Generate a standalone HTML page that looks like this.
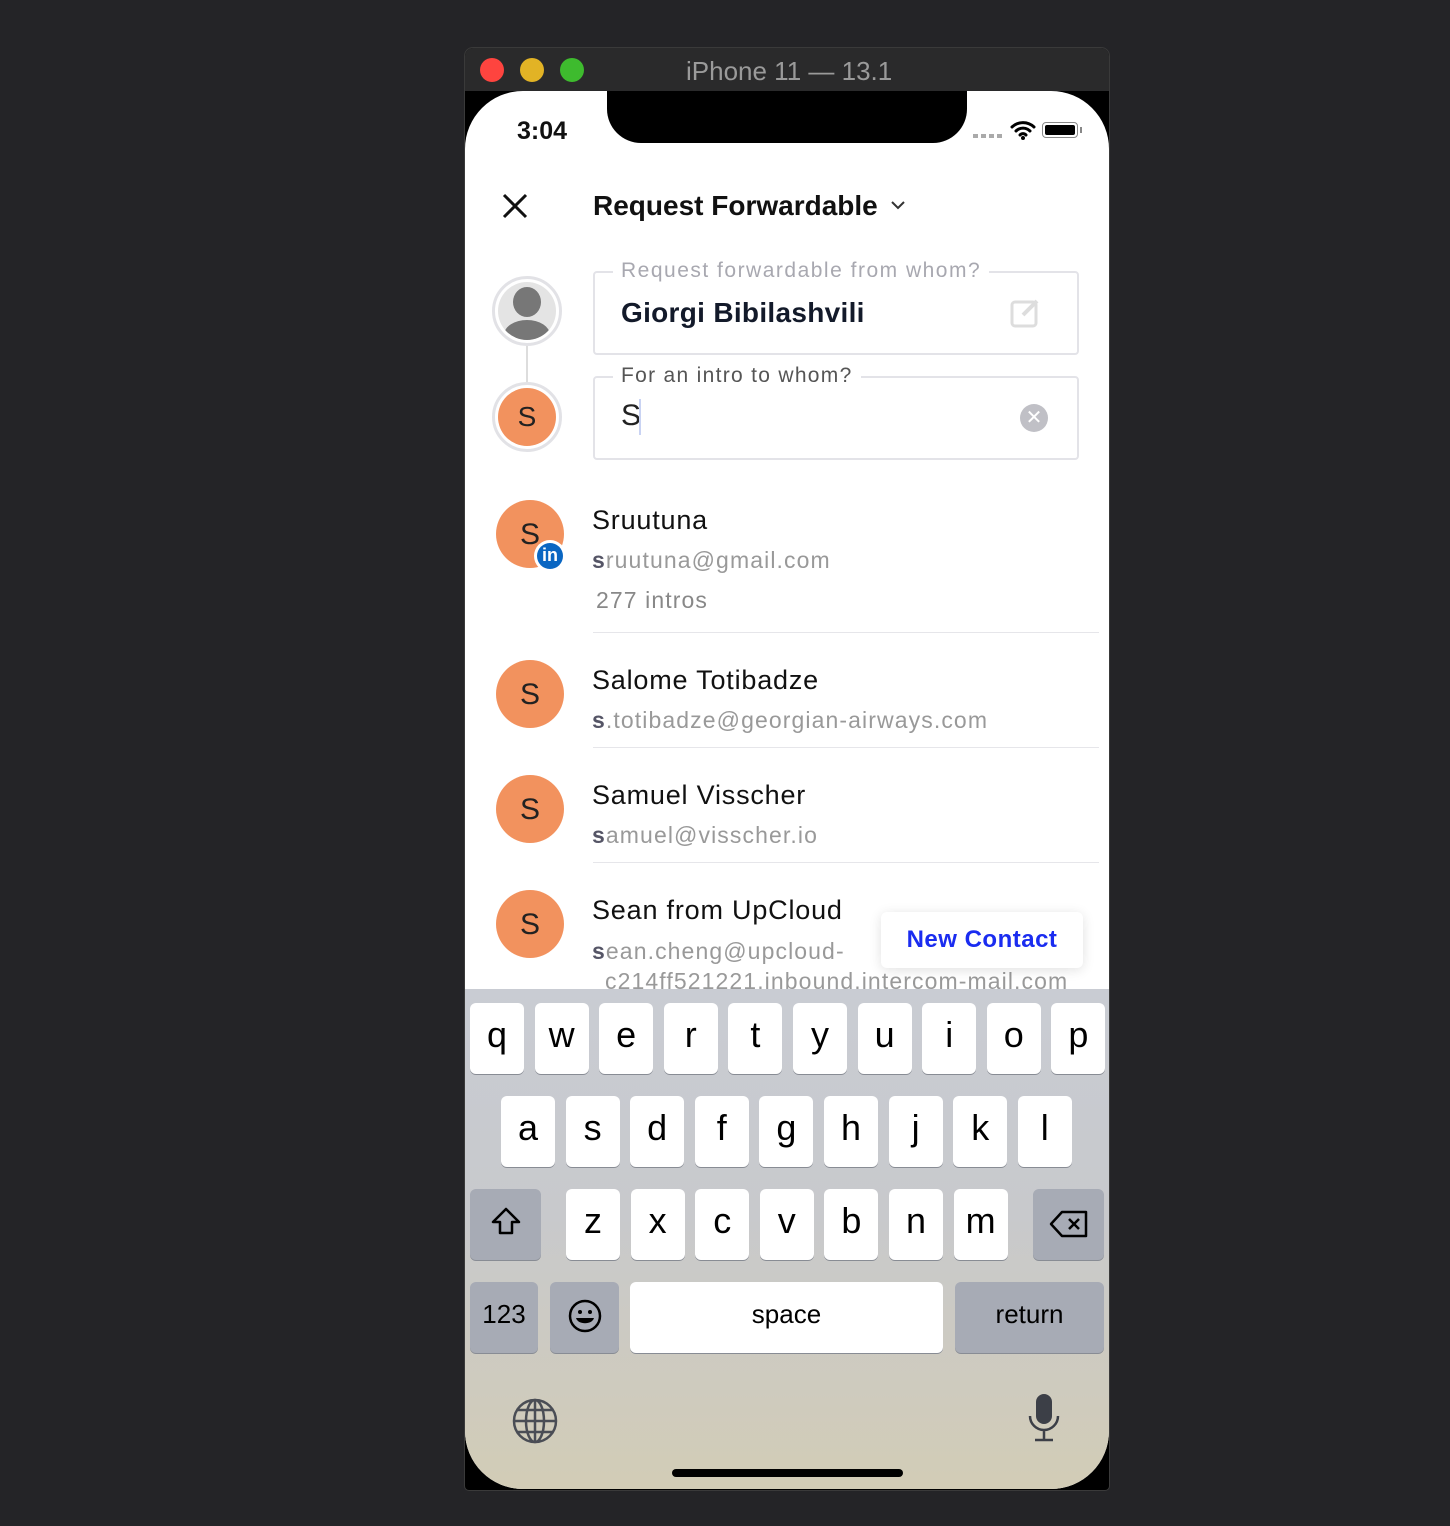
<!DOCTYPE html>
<html><head><meta charset="utf-8"><style>
body{margin:0;width:1450px;height:1526px;background:#242427;position:relative;overflow:hidden;font-family:"Liberation Sans",sans-serif}
.a{position:absolute}
.win{left:465px;top:48px;width:644px;height:1442px;background:#000;border-radius:8px 8px 4px 4px;box-shadow:0 0 0 1px #3a3a3a}
.tb{left:465px;top:48px;width:644px;height:43px;background:#2a2a2b;border-radius:8px 8px 0 0}
.dot{width:24px;height:24px;border-radius:50%;top:58px}
.scr{left:465px;top:91px;width:644px;height:1398px;background:#fff;border-radius:58px;overflow:hidden}
.t{color:#111;white-space:nowrap}
.av{width:68px;height:68px;border-radius:50%;background:#f2925e;color:#222;font-size:30px;text-align:center;line-height:70px}
.sep{height:1px;background:#e6e6ea;left:128px;width:506px}
.key{background:#fff;border-radius:6px;box-shadow:0 1px 0 #888c94;text-align:center;color:#000;font-size:36px;line-height:64px;height:71px}
.g{background:#a7abb5}
.nm{font-size:27px;letter-spacing:0.8px}
.em{font-size:23px;color:#999;letter-spacing:1.1px}
</style></head><body>
<div class="a win"></div>
<div class="a tb"></div>
<div class="a dot" style="left:480px;background:#fe443f"></div>
<div class="a dot" style="left:520px;background:#e2b325"></div>
<div class="a dot" style="left:560px;background:#3ebb2e"></div>
<div class="a" style="left:686px;top:56px;color:#9a9a9a;font-size:26px">iPhone 11 — 13.1</div>
<div class="a scr">
 <div class="a" style="left:142px;top:0;width:360px;height:52px;background:#000;border-radius:0 0 34px 34px"></div>
 <div class="a t" style="left:52px;top:26px;font-size:25px;font-weight:bold">3:04</div>
 <div class="a" style="left:508px;top:43px;width:30px;height:4px;background:repeating-linear-gradient(90deg,#aaa 0 5px,transparent 5px 8px)"></div>
 <svg class="a" style="left:545px;top:28px" width="26" height="22" viewBox="0 0 26 22"><path d="M2 8a16 16 0 0 1 22 0M6 12a10 10 0 0 1 14 0M10 16a4 4 0 0 1 6 0" stroke="#000" stroke-width="3" fill="none" stroke-linecap="round"/><circle cx="13" cy="19" r="2" fill="#000"/></svg>
 <div class="a" style="left:577px;top:31px;width:36px;height:16px;border:1.5px solid #888;border-radius:4px;box-sizing:border-box;padding:2px"><div style="background:#000;height:100%;border-radius:2px"></div></div>
 <div class="a" style="left:615px;top:36px;width:2px;height:6px;background:#888"></div>
 <svg class="a" style="left:37px;top:102px" width="26" height="26"><path d="M2 2L24 24M24 2L2 24" stroke="#111" stroke-width="3"/></svg>
 <div class="a t" style="left:128px;top:99px;font-size:28px;font-weight:bold">Request Forwardable</div>
 <svg class="a" style="left:425px;top:108px" width="16" height="12"><path d="M2 3l6 6 6-6" stroke="#333" stroke-width="2" fill="none"/></svg>
 <div class="a" style="left:61px;top:240px;width:2px;height:54px;background:#ddd"></div>
 <div class="a" style="left:27px;top:185px;width:70px;height:70px;border-radius:50%;border:3px solid #e2e2e6;background:#fff;box-sizing:border-box">
  <div class="a" style="left:3px;top:3px;width:58px;height:58px;border-radius:50%;background:#e4e4e4;overflow:hidden">
  <div class="a" style="left:15px;top:5px;width:28px;height:30px;border-radius:50%;background:#777"></div>
  <div class="a" style="left:6px;top:38px;width:46px;height:30px;border-radius:50%;background:#777"></div></div>
 </div>
 <div class="a" style="left:27px;top:291px;width:70px;height:70px;border-radius:50%;border:3px solid #e2e2e6;box-sizing:border-box;background:#fff"><div class="a av" style="left:3px;top:3px;width:58px;height:58px;line-height:58px;font-size:28px">S</div></div>
 <div class="a" style="left:128px;top:180px;width:482px;height:80px;border:2px solid #e3e3e8;border-radius:4px"></div>
 <div class="a t" style="left:148px;top:168px;background:#fff;padding:0 8px;color:#a8a8b0;font-size:21px;letter-spacing:1.5px">Request forwardable from whom?</div>
 <div class="a t" style="left:156px;top:206px;font-size:28px;font-weight:bold;color:#131a2a;letter-spacing:0.3px">Giorgi Bibilashvili</div>
 <svg class="a" style="left:544px;top:204px" width="34" height="34"><rect x="3" y="7" width="24" height="24" rx="3" stroke="#ddd" stroke-width="3" fill="none"/><path d="M14 20l14-14" stroke="#ddd" stroke-width="4"/></svg>
 <div class="a" style="left:128px;top:285px;width:482px;height:80px;border:2px solid #e3e3e8;border-radius:4px"></div>
 <div class="a t" style="left:148px;top:273px;background:#fff;padding:0 8px;color:#555;font-size:21px;letter-spacing:1.3px">For an intro to whom?</div>
 <div class="a t" style="left:156px;top:308px;font-size:30px;color:#222">S</div>
 <div class="a" style="left:174px;top:308px;width:2px;height:36px;background:#c9d3f3"></div>
 <div class="a" style="left:555px;top:313px;width:28px;height:28px;border-radius:50%;background:#c0c0c6;color:#fff;text-align:center;line-height:28px;font-size:20px">✕</div>
 <div class="a av" style="left:31px;top:409px">S</div>
 <div class="a" style="left:69px;top:449px;width:32px;height:32px;border-radius:50%;background:#fff"><div style="margin:3px;width:26px;height:26px;border-radius:50%;background:#0a66c2;color:#fff;font-weight:bold;font-size:18px;text-align:center;line-height:25px">in</div></div>
 <div class="a t nm" style="left:127px;top:414px">Sruutuna</div>
 <div class="a t em" style="left:127px;top:456px"><b style="color:#556">s</b>ruutuna@gmail.com</div>
 <div class="a t em" style="left:131px;top:496px;color:#888">277 intros</div>
 <div class="a sep" style="top:541px"></div>
 <div class="a av" style="left:31px;top:569px">S</div>
 <div class="a t nm" style="left:127px;top:574px">Salome Totibadze</div>
 <div class="a t em" style="left:127px;top:616px"><b style="color:#556">s</b>.totibadze@georgian-airways.com</div>
 <div class="a sep" style="top:656px"></div>
 <div class="a av" style="left:31px;top:684px">S</div>
 <div class="a t nm" style="left:127px;top:689px">Samuel Visscher</div>
 <div class="a t em" style="left:127px;top:731px"><b style="color:#556">s</b>amuel@visscher.io</div>
 <div class="a sep" style="top:771px"></div>
 <div class="a av" style="left:31px;top:799px">S</div>
 <div class="a t nm" style="left:127px;top:804px">Sean from UpCloud</div>
 <div class="a t em" style="left:127px;top:847px"><b style="color:#556">s</b>ean.cheng@upcloud-</div>
 <div class="a t em" style="left:140px;top:877px">c214ff521221.inbound.intercom-mail.com</div>
 <div class="a" style="left:416px;top:821px;width:202px;height:56px;background:#fff;border-radius:6px;box-shadow:0 2px 12px rgba(0,0,0,.12);color:#1a2cf0;font-weight:bold;font-size:24px;text-align:center;line-height:56px;letter-spacing:0.5px">New Contact</div>
 <div class="a" style="left:0;top:898px;width:644px;height:500px;background:linear-gradient(#c9ccd3 0%,#c8c9cc 45%,#d2ccb6 100%)"></div>
</div>
<div id="kb"></div>
<script>
var h='';function k(x,y,w,t,c,fs){h+='<div class="a key'+(c?' g':'')+'" style="left:'+x+'px;top:'+y+'px;width:'+w+'px;'+(fs?'font-size:'+fs+'px;':'')+'">'+t+'</div>';}
'qwertyuiop'.split('').forEach(function(c,i){k(470+i*64.6,1003,54,c)});
'asdfghjkl'.split('').forEach(function(c,i){k(501+i*64.6,1096,54,c)});
'zxcvbnm'.split('').forEach(function(c,i){k(566+i*64.6,1189,54,c)});
k(470,1189,71,'<svg width="34" height="34" viewBox="0 0 34 34" style="margin-top:16px"><path d="M17 4L4 17h7v11h12V17h7z" stroke="#000" stroke-width="2.5" fill="none" stroke-linejoin="round"/></svg>',1);
k(1033,1189,71,'<svg width="42" height="30" viewBox="0 0 42 30" style="margin-top:20px"><path d="M14 3h24v24H14L3 15z" stroke="#000" stroke-width="2.5" fill="none" stroke-linejoin="round"/><path d="M21 10l10 10M31 10L21 20" stroke="#000" stroke-width="2.5"/></svg>',1);
k(470,1282,68,'123',1,26);k(550,1282,69,'<svg width="36" height="36" viewBox="0 0 36 36" style="margin-top:16px"><circle cx="18" cy="18" r="15" stroke="#000" stroke-width="2.5" fill="none"/><circle cx="13" cy="14" r="2"/><circle cx="23" cy="14" r="2"/><path d="M9 20h18c-2 7-16 7-18 0z"/></svg>',1);
k(630,1282,313,'space',0,26);k(955,1282,149,'return',1,26);
document.getElementById('kb').innerHTML=h;
</script>
<svg class="a" style="left:511px;top:1397px" width="48" height="48" viewBox="0 0 48 48"><g stroke="#4a4d55" stroke-width="2.5" fill="none"><circle cx="24" cy="24" r="21"/><ellipse cx="24" cy="24" rx="9" ry="21"/><path d="M3 24h42M24 3v42M7 13h34M7 35h34"/></g></svg>
<svg class="a" style="left:1026px;top:1392px" width="36" height="52" viewBox="0 0 36 52"><rect x="10" y="2" width="16" height="30" rx="8" fill="#3c3f47"/><path d="M4 24a14 14 0 0 0 28 0M18 38v10M9 48h18" stroke="#3c3f47" stroke-width="2.5" fill="none"/></svg>
<div class="a" style="left:672px;top:1469px;width:231px;height:8px;border-radius:4px;background:#000"></div>
</body></html>
